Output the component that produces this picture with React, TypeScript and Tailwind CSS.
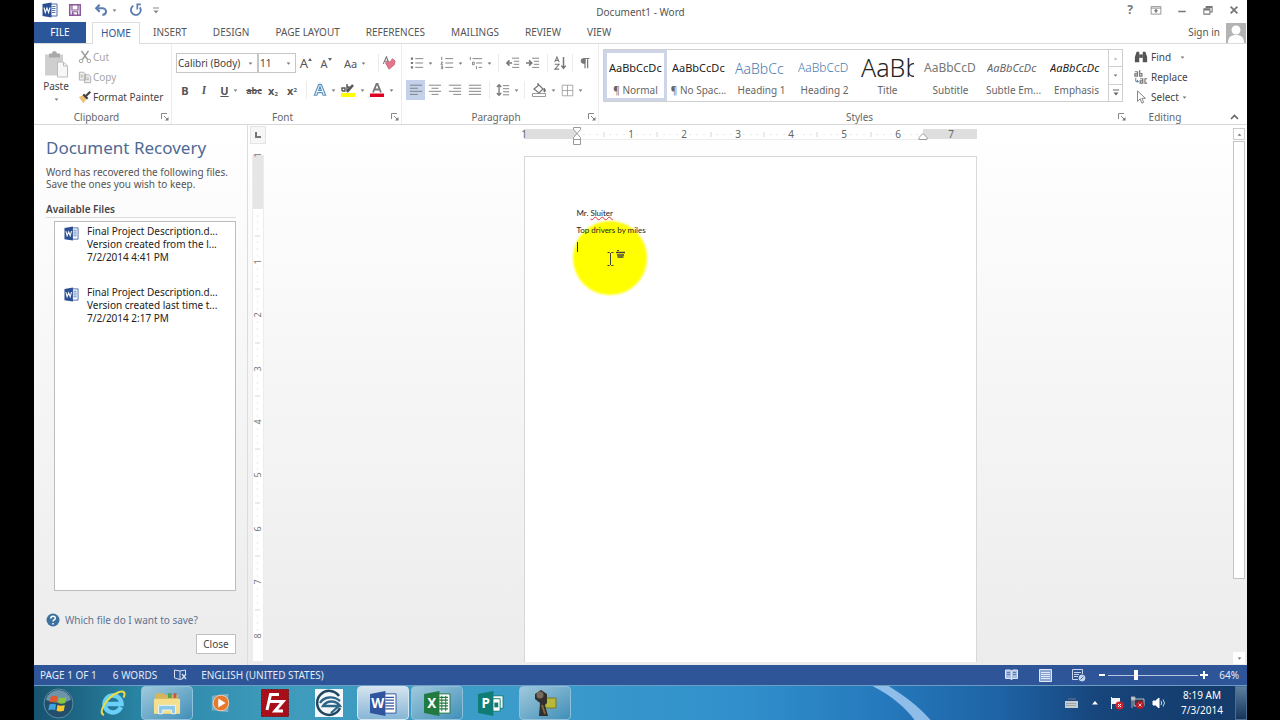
import type { ReactNode } from "react";

function Caret({ light = false }: { light?: boolean }) {
  return (
    <svg width="5" height="3" viewBox="0 0 6 4" className="shrink-0" aria-hidden="true">
      <path d="M0.5 0.5h5L3 3.5z" fill={light ? "#bbb" : "#777"} />
    </svg>
  );
}

function Icon({ children, size = 16 }: { children: ReactNode; size?: number }) {
  return (
    <svg width={size} height={size} viewBox="0 0 16 16" fill="none" stroke="#777" className="shrink-0" aria-hidden="true">
      {children}
    </svg>
  );
}

function Tool({ label, className = "w-[20px]", children }: { label: string; className?: string; children: ReactNode }) {
  return (
    <button aria-label={label} className={`flex h-[20px] shrink-0 items-center justify-center gap-1 leading-none ${className}`}>
      {children}
    </button>
  );
}

function Divider() {
  return <span className="mx-1 h-[18px] w-px shrink-0 bg-[#ececec]" />;
}

function Launcher() {
  return (
    <button aria-label="More options" className="flex h-3 w-3 items-center justify-center">
      <svg width="8" height="8" viewBox="0 0 8 8" fill="none" stroke="#888" aria-hidden="true">
        <path d="M0.5 6V0.5H6M3 3l3 3" />
        <path d="M7.5 4v3.5H4z" fill="#777" stroke="none" />
      </svg>
    </button>
  );
}

function GroupLabel({ children, launcher = true }: { children: string; launcher?: boolean }) {
  return (
    <div className="mt-auto flex h-[14px] items-center text-[#666]">
      <span className="flex-1 text-center">{children}</span>
      {launcher && <Launcher />}
    </div>
  );
}

function WordMark({ size = 16 }: { size?: number }) {
  return (
    <svg width={size} height={size} viewBox="0 0 16 16" aria-hidden="true">
      <path d="M8 2h7v12H8z" fill="#fff" stroke="#4a6cab" />
      <path d="M10 4.500h3.500M10 6.500h3.500M10 8.500h3.500M10 10.500h3.500" stroke="#4a6cab" strokeWidth="0.900" />
      <path d="M0.500 2L9.500 0.500v15L0.500 14z" fill="#2b4f93" />
      <path d="M2 5.500l1.300 5L5 6l1.600 4.500L8 5.500" fill="none" stroke="#fff" strokeWidth="1.100" />
    </svg>
  );
}

function TitleBar() {
  const controls: { label: string; art: ReactNode }[] = [
    { label: "Ribbon display options", art: <><path d="M1.500 3.500h13v10h-13zM1.500 5.500h13" /><path d="M8 7.500v4M6 9.500l2-2 2 2" strokeWidth="1.800" /></> },
    { label: "Minimize", art: <path d="M3 10h10" strokeWidth="2" /> },
    { label: "Restore", art: <><path d="M2.500 6.500h8v7h-8zM2.500 8h8" strokeWidth="1.400" /><path d="M5.500 6V3.500h8v7H11M5.500 4.500h8" strokeWidth="1.400" /></> },
    { label: "Close", art: <path d="M3.500 3.500l9 9M12.500 3.500l-9 9" strokeWidth="2.400" /> },
  ];
  return (
    <header className="grid h-[22px] shrink-0 grid-cols-[1fr_auto_1fr] items-center">
      <div className="flex items-center pb-1 pl-2">
        <WordMark />
        <Tool label="Save" className="ml-[7px] w-[20px]">
          <Icon size={14}>
            <path d="M2 2h12v12H2z" stroke="#8a5a9c" strokeWidth="1.800" />
            <path d="M4.500 2v6h7V2M5 14v-4h6v4" stroke="#8a5a9c" strokeWidth="1.400" />
            <path d="M6.500 11v3" stroke="#8a5a9c" />
          </Icon>
        </Tool>
        <Tool label="Undo" className="ml-[6px] w-[28px]">
          <Icon size={14}>
            <path d="M3 6h6.500a4 3.500 0 0 1 0 7.500" stroke="#5b7cb0" strokeWidth="2.400" />
            <path d="M6.500 2L2.500 6l4 4" stroke="#5b7cb0" strokeWidth="2.400" />
          </Icon>
          <Caret />
        </Tool>
        <Tool label="Redo" className="ml-[7px] w-[20px]">
          <Icon size={14}>
            <path d="M5 3.200A5.600 5.600 0 1 0 12.500 5" stroke="#5b7cb0" strokeWidth="2.100" />
            <path d="M8.500 1.500h5M9.500 2v5.500" stroke="#5b7cb0" strokeWidth="1.900" />
          </Icon>
        </Tool>
        <Tool label="Customize quick access toolbar">
          <svg width="6" height="7" viewBox="0 0 6 7" aria-hidden="true"><path d="M0 1h6" stroke="#888" /><path d="M0.500 3.500h5L3 6.500z" fill="#888" /></svg>
        </Tool>
      </div>
      <h1 className="text-[10px] text-[#555]">Document1 - Word</h1>
      <div className="flex justify-end pb-1">
        <button aria-label="Help" className="w-[26px] text-[12px] font-bold text-[#777]">?</button>
        {controls.map((c) => (
          <Tool key={c.label} label={c.label} className="w-[26px]">
            <Icon size={12}>{c.art}</Icon>
          </Tool>
        ))}
      </div>
    </header>
  );
}

function Tabs() {
  const tabs = ["INSERT", "DESIGN", "PAGE LAYOUT", "REFERENCES", "MAILINGS", "REVIEW", "VIEW"];
  return (
    <nav className="flex h-[22px] shrink-0 items-stretch border-b border-[#dcdcdc] text-[10px] text-[#555]">
      <button className="w-[52px] bg-[#2b579a] text-white">FILE</button>
      <button className="-mb-px ml-[6px] w-[48px] border border-b-0 border-[#dcdcdc] bg-white text-[#2b579a]">HOME</button>
      {tabs.map((t) => (
        <button key={t} className="px-[13px]">{t}</button>
      ))}
      <div className="ml-auto flex items-center gap-[6px]">
        <a href="#signin">Sign in</a>
        <svg width="20" height="20" viewBox="0 0 20 20" className="mr-px" aria-hidden="true">
          <path d="M0 0h20v20H0z" fill="#b3b3b3" />
          <circle cx="10" cy="7" r="4.500" fill="#fff" />
          <path d="M2 20c0-6 3-8 8-8s8 2 8 8z" fill="#fff" />
        </svg>
      </div>
    </nav>
  );
}

function ClipboardGroup() {
  return (
    <section className="flex w-[138px] flex-col border-r border-[#ececec]">
      <div className="flex">
        <button className="flex w-[44px] flex-col items-center pt-[6px] text-[#444]">
          <svg width="26" height="29" viewBox="0 0 26 28" aria-hidden="true">
            <path d="M2 4h18v21H2z" fill="#cfcfcf" />
            <path d="M6 3h3a2.500 2.500 0 0 1 5 0h3v4H6z" fill="#aaa" />
            <path d="M14.500 11.500h6l4 4v11h-10z" fill="#f7f7f7" stroke="#bbb" />
            <path d="M20.500 11.500v4h4" fill="none" stroke="#bbb" />
          </svg>
          <span className="leading-[14px]">Paste</span>
          <span className="pt-[5px]"><Caret /></span>
        </button>
        <div className="flex flex-col items-start pt-[3px]">
          <button className="flex h-[20px] items-center gap-px text-[#a6a6a6]">
            <Icon size={14}>
              <path d="M4 1l7 10M12 1L5 11" stroke="#999" strokeWidth="1.800" />
              <circle cx="3.500" cy="12.500" r="2" stroke="#999" />
              <circle cx="12.500" cy="12.500" r="2" stroke="#999" />
            </Icon>
            Cut
          </button>
          <button className="flex h-[20px] items-center gap-px text-[#a6a6a6]">
            <Icon size={14}>
              <path d="M1.500 2.500h5l2 2v7h-7zM7.500 5.500h5l2 2v7h-7z" fill="#eee" stroke="#aaa" />
              <path d="M3 6h3M3 8h3M9.500 9h3M9.500 11h3" stroke="#aaa" />
            </Icon>
            Copy
          </button>
          <button className="flex h-[20px] items-center gap-px whitespace-nowrap text-[#444]">
            <Icon size={14}>
              <path d="M1 8l5-2 4 4-4 5z" fill="#eebf72" stroke="none" />
              <path d="M6 5l5 5M8.500 7.500L14 2" stroke="#444" strokeWidth="2.500" />
            </Icon>
            Format Painter
          </button>
        </div>
      </div>
      <GroupLabel>Clipboard</GroupLabel>
    </section>
  );
}

function Combo({ label, value, className }: { label: string; value: string; className: string }) {
  return (
    <span className={`relative flex h-[20px] items-center border border-[#c6c6c6] bg-white ${className}`}>
      <select aria-label={label} className="h-full w-full appearance-none bg-transparent pl-px text-[10px] text-[#444]">
        <option>{value}</option>
      </select>
      <span className="pointer-events-none absolute right-1 flex"><Caret /></span>
    </span>
  );
}

function FontGroup() {
  return (
    <section className="flex w-[230px] flex-col border-r border-[#ececec] pl-1">
      <div className="mt-[9px] flex h-[20px] items-center">
        <Combo label="Font" value="Calibri (Body)" className="w-[82px]" />
        <Combo label="Font size" value="11" className="w-[38px]" />
        <Tool label="Grow font"><span className="text-[13px] text-[#555]">A</span><span className="-ml-1 -mt-2"><svg width="4" height="3" viewBox="0 0 4 3"><path d="M0 3h4L2 0z" fill="#666" /></svg></span></Tool>
        <Tool label="Shrink font"><span className="text-[11px] text-[#555]">A</span><span className="-ml-1 -mt-2"><svg width="4" height="3" viewBox="0 0 4 3"><path d="M0 0h4L2 3z" fill="#666" /></svg></span></Tool>
        <Tool label="Change case" className="w-[38px]"><span className="text-[11px] text-[#555]">Aa</span><Caret /></Tool>
        <Divider />
        <Tool label="Clear formatting" className="w-[12px]">
          <Icon size={14}>
            <path d="M1.500 9L5 1l3 7M3 6h4" strokeWidth="1.300" />
            <path d="M4 8l3-2 2 1 3-4 3 3-1 4-6 5z" fill="#e2768b" stroke="#cc6179" />
          </Icon>
        </Tool>
      </div>
      <div className="mt-[7px] flex h-[20px] items-center text-[11px] text-[#555]">
        <Tool label="Bold" className="w-[18px]"><b>B</b></Tool>
        <Tool label="Italic"><i className="font-serif font-bold">I</i></Tool>
        <Tool label="Underline" className="w-[30px]"><b className="underline">U</b><Caret /></Tool>
        <Tool label="Strikethrough"><b className="text-[9px] line-through">abc</b></Tool>
        <Tool label="Subscript" className="w-[18px]"><b>x<sub className="text-[6px]">2</sub></b></Tool>
        <Tool label="Superscript"><b>x<sup className="text-[6px]">2</sup></b></Tool>
        <Divider />
        <Tool label="Text effects" className="w-[26px]">
          <Icon size={14}>
            <path d="M1.500 14L6.500 1.500h3l5 12.500h-3l-1-3h-5l-1 3zM6.500 8.500h3L8 4z" fill="#eef6fc" stroke="#5b93bd" strokeWidth="1.300" />
          </Icon>
          <Caret />
        </Tool>
        <Tool label="Text highlight color" className="w-[30px]">
          <Icon>
            <path d="M1 11h14v4H1z" fill="#ff0" stroke="none" />
            <path d="M7 10l6-7" stroke="#555" strokeWidth="2.500" />
            <path d="M2 9V6h3v3H2M7 2v6h2V5H7" strokeWidth="1.400" stroke="#555" />
          </Icon>
          <Caret />
        </Tool>
        <Tool label="Font color" className="w-[29px]">
          <Icon>
            <path d="M1 11.500h14v3.500H1z" fill="#e00020" stroke="none" />
            <path d="M4 10.500L7.500 2h1L12 10.500M5 7.500h6" strokeWidth="1.800" />
          </Icon>
          <Caret />
        </Tool>
      </div>
      <GroupLabel>Font</GroupLabel>
    </section>
  );
}

function ParagraphGroup() {
  return (
    <section className="flex w-[197px] flex-col border-r border-[#ececec] pl-1">
      <div className="mt-[9px] flex h-[20px] items-center">
        <Tool label="Bullets" className="w-[30px]">
          <Icon size={14}>
            <path d="M6 3h9M6 8h9M6 13h9" />
            <path d="M1 3h2.500M1 8h2.500M1 13h2.500" strokeWidth="2.500" />
          </Icon>
          <Caret />
        </Tool>
        <Tool label="Numbering" className="w-[30px]">
          <Icon size={14}>
            <path d="M6 3h9M6 8h9M6 13h9M2 1v3.500M1 7h2l-2 2.500h2.500M1 11.500h2v3H1M1.500 13H3" />
          </Icon>
          <Caret />
        </Tool>
        <Tool label="Multilevel list" className="w-[28px]">
          <Icon size={14}>
            <path d="M4 3h11M8 8h7M11 13h4M1.500 1v3.500M4 7h2v3H4zM8.500 11.500v3.500" />
          </Icon>
          <Caret />
        </Tool>
        <Divider />
        <Tool label="Decrease indent">
          <Icon size={14}><path d="M7 2.500h8M9 6h6M9 9.500h6M7 13h8" /><path d="M7 8H1M4 5L1 8l3 3" strokeWidth="1.800" /></Icon>
        </Tool>
        <Tool label="Increase indent">
          <Icon size={14}><path d="M7 2.500h8M9 6h6M9 9.500h6M7 13h8" /><path d="M0 8h6M3.500 5l3 3-3 3" strokeWidth="1.800" /></Icon>
        </Tool>
        <Divider />
        <Tool label="Sort" className="w-[16px]">
          <Icon size={14}><path d="M2 7l2.500-6L7 7M3 5h3M2 9.500h5l-5 5.500h5" strokeWidth="1.200" /><path d="M12 1v13M9.500 11l2.500 3 2.500-3" strokeWidth="1.700" /></Icon>
        </Tool>
        <Divider />
        <Tool label="Show formatting marks" className="w-[16px]">
          <Icon size={12}><path d="M8 3v12M11.500 3v12M6 2h8" strokeWidth="1.600" /><path d="M8 2H6a3 3 0 0 0 0 6.500h2z" fill="#777" /></Icon>
        </Tool>
      </div>
      <div className="mt-[7px] flex h-[20px] items-center">
        <Tool label="Align left" className="w-[19px] bg-[#c3d1ea]"><Icon size={14}><path d="M1 2.500h14M1 6h9M1 9.500h14M1 13h9" /></Icon></Tool>
        <Tool label="Align center"><Icon size={14}><path d="M1 2.500h14M4 6h8M1 9.500h14M4 13h8" /></Icon></Tool>
        <Tool label="Align right"><Icon size={14}><path d="M1 2.500h14M6 6h9M1 9.500h14M6 13h9" /></Icon></Tool>
        <Tool label="Justify"><Icon size={14}><path d="M1 2.500h14M1 6h14M1 9.500h14M1 13h14" /></Icon></Tool>
        <Divider />
        <Tool label="Line spacing" className="w-[26px]">
          <Icon size={14}><path d="M8 3h7M8 6.500h7M8 10h7M8 13.500h7" /><path d="M3.500 2v12M1 4.500L3.500 2 6 4.500M1 11.500L3.500 14 6 11.500" strokeWidth="1.500" /></Icon>
          <Caret />
        </Tool>
        <Divider />
        <Tool label="Shading" className="w-[28px]">
          <Icon><path d="M1.500 11.500h13v3h-13z" stroke="#999" /><path d="M3 7l5-4 4 4-4 4zM7 1v4" strokeWidth="1.300" /><path d="M13 6c2 2 1.500 4 0 4z" fill="#555" /></Icon>
          <Caret />
        </Tool>
        <Tool label="Borders" className="w-[29px]">
          <Icon size={13}><path d="M1.500 1.500h13v13h-13zM8 1.500v13M1.500 8h13" stroke="#999" /></Icon>
          <Caret />
        </Tool>
      </div>
      <GroupLabel>Paragraph</GroupLabel>
    </section>
  );
}

const styleCards = [
  { name: "¶ Normal", sample: "AaBbCcDc", look: "text-[11px] text-[#222]" },
  { name: "¶ No Spac...", sample: "AaBbCcDc", look: "text-[11px] text-[#222]" },
  { name: "Heading 1", sample: "AaBbCc", look: "text-[14px] font-light text-[#4a7ab0]" },
  { name: "Heading 2", sample: "AaBbCcD", look: "text-[12px] font-light text-[#4a7ab0]" },
  { name: "Title", sample: "AaBb", look: "text-[25px] font-light text-[#222]" },
  { name: "Subtitle", sample: "AaBbCcD", look: "text-[12px] text-[#777]" },
  { name: "Subtle Em...", sample: "AaBbCcDc", look: "text-[11px] italic text-[#666]" },
  { name: "Emphasis", sample: "AaBbCcDc", look: "text-[11px] italic text-[#222]" },
];

function StylesGroup() {
  return (
    <section className="flex min-w-0 flex-1 flex-col pl-1">
      <div className="mt-[5px] flex h-[53px] w-[520px] border border-[#cfcfcf] bg-white">
        {styleCards.map((s, i) => (
          <button
            key={s.name}
            className={`flex w-[63px] shrink-0 flex-col items-center border-[3px] ${i === 0 ? "border-[#cdd5e6]" : "border-transparent"}`}
          >
            <span className={`flex h-[30px] w-[53px] items-center justify-start overflow-hidden whitespace-nowrap ${s.look}`}>{s.sample}</span>
            <span className="whitespace-nowrap leading-[14px] text-[#666]">{s.name}</span>
          </button>
        ))}
        <div className="flex flex-1 flex-col divide-y divide-[#cfcfcf] border-l border-[#cfcfcf]">
          <Tool label="Scroll styles up" className="min-h-0 w-full flex-1"><span className="rotate-180"><Caret light /></span></Tool>
          <Tool label="Scroll styles down" className="min-h-0 w-full flex-1"><Caret /></Tool>
          <Tool label="More styles" className="min-h-0 w-full flex-1">
            <svg width="6" height="7" viewBox="0 0 6 7" aria-hidden="true"><path d="M0 1h6" stroke="#666" /><path d="M0.500 3.500h5L3 6.500z" fill="#666" /></svg>
          </Tool>
        </div>
      </div>
      <GroupLabel>Styles</GroupLabel>
    </section>
  );
}

function EditingGroup() {
  return (
    <section className="flex w-[119px] text-[#444]">
      <div className="flex w-[68px] flex-col pl-[6px]">
        <div className="flex flex-col items-start pt-[3px]">
          <button className="flex h-[20px] items-center gap-[3px]">
            <Icon size={14}>
              <path d="M1 14V8l2-6h3v12zM10 14V2h3l2 6v6z" fill="#555" stroke="none" />
              <path d="M6 5h4v4H6z" fill="#555" stroke="none" />
            </Icon>
            Find<span className="pl-[6px]"><Caret /></span>
          </button>
          <button className="flex h-[20px] items-center gap-[3px]">
            <Icon size={14}>
              <path d="M1 2h3v5H1V4.500h3M6.500 0v7H9V4H6.500M7 10h3v5H7v-2.500h3M15 10h-2.500v5H15" strokeWidth="1.400" />
              <path d="M2 9v4h3M3.500 11.500L5 13l-1.500 1.500" stroke="#4a6da7" />
            </Icon>
            Replace
          </button>
          <button className="flex h-[20px] items-center gap-[3px]">
            <Icon size={14}><path d="M4 1v12l3-3 2 5 2-1-2-4.500h4z" fill="#fff" stroke="#777" /></Icon>
            Select<Caret />
          </button>
        </div>
        <GroupLabel launcher={false}>Editing</GroupLabel>
      </div>
      <button aria-label="Collapse the ribbon" className="ml-auto mr-2 mt-auto flex h-[14px] items-center">
        <svg width="9" height="6" viewBox="0 0 9 6" fill="none" stroke="#666" strokeWidth="1.600"><path d="M1 5l3.500-3.500L8 5" /></svg>
      </button>
    </section>
  );
}

function RecoveryPane() {
  const files = [
    { from: "Version created from the l...", time: "7/2/2014 4:41 PM" },
    { from: "Version created last time t...", time: "7/2/2014 2:17 PM" },
  ];
  return (
    <aside className="flex w-[214px] shrink-0 flex-col border-r border-[#dcdcdc] pl-3 text-[10px] text-[#444]">
      <h2 className="mt-[9px] text-[17px] leading-[28px] text-[#4f6a94]">Document Recovery</h2>
      <p className="mt-[4px] leading-[12px] text-[#555]">Word has recovered the following files.<br />Save the ones you wish to keep.</p>
      <h3 className="mr-[11px] mt-[12px] border-b border-[#dcdcdc] font-semibold leading-[15px] text-[#444]">Available Files</h3>
      <ul className="ml-[8px] mr-[11px] mt-[3px] flex-1 border border-[#bdbdbd] bg-white pl-[9px] pt-[3px]">
        {files.map((f) => (
          <li key={f.time} className="mb-[22px] flex gap-[8px]">
            <span className="pt-px"><WordMark size={15} /></span>
            <a href="#file" className="min-w-0 whitespace-nowrap leading-[13px] text-[#222]">
              Final Project Description.d...<br />{f.from}<br />{f.time}
            </a>
          </li>
        ))}
      </ul>
      <a href="#help" className="mt-[21px] flex items-center gap-[5px] leading-[16px] text-[#5f7391]">
        <svg width="14" height="14" viewBox="0 0 14 14" aria-hidden="true">
          <circle cx="7" cy="7" r="6.500" fill="#3d719f" />
          <path d="M4.800 5.500c0-3 4.500-3 4.500-.3C9.300 7 7 6.800 7 8.600M7 10v1.500" fill="none" stroke="#fff" strokeWidth="1.500" />
        </svg>
        Which file do I want to save?
      </a>
      <button className="mb-[11px] mr-[11px] mt-[6px] h-[20px] w-[40px] self-end border border-[#c0c0c0] bg-white">Close</button>
    </aside>
  );
}

const inch = 53.4;

function VerticalRuler() {
  const marks = Array.from({ length: 64 }, (_, i) => i + 1).filter((i) => i % 8 !== 0);
  return (
    <div className="flex w-[19px] shrink-0 flex-col items-center">
      <button aria-label="Tab selector" className="mt-px flex h-[18px] w-[16px] items-center justify-center border border-[#e4e4e4] bg-[#f6f6f6]">
        <svg width="6" height="6" viewBox="0 0 6 6"><path d="M1 0v5h5" fill="none" stroke="#777" strokeWidth="2" /></svg>
      </button>
      <svg width="12" height="512" viewBox="0 0 12 512" className="mt-[5px]" fontSize="9" fill="#777" aria-hidden="true">
        <path d="M0 6h11v506H0z" fill="#fff" />
        <path d="M0 6h11v54H0z" fill="#e6e6e6" />
        <path d="M0.500 6v506M11.500 6v506" stroke="#ececec" />
        {marks.map((m) => (
          <path key={m} d={`M${m % 4 === 0 ? 3 : 5} ${Math.round(60 + (m * inch) / 8)}h${m % 4 === 0 ? 5 : 1}`} stroke="#d6d6d6" />
        ))}
        {[1, 0, 1, 2, 3, 4, 5, 6, 7, 8].map((n, i) =>
          n === 0 ? null : (
            <text key={i} textAnchor="middle" transform={`translate(9 ${Math.round(6 + i * inch)}) rotate(-90)`}>{n}</text>
          ),
        )}
      </svg>
    </div>
  );
}

function HorizontalRuler() {
  const marks = Array.from({ length: 51 }, (_, i) => i + 1).filter((i) => i % 8 !== 0);
  return (
    <svg width="461" height="31" viewBox="0 0 461 31" fontSize="10" fill="#666" className="mx-auto shrink-0" aria-hidden="true">
      <path d="M4 4h453v10H4z" fill="#fff" />
      <path d="M4 4h53v10H4zM403 4h54v10H403z" fill="#dedede" />
      <path d="M57 14.500h346" stroke="#ececec" />
      {marks.map((m) => (
        <path key={m} d={`M${Math.round(57 + (m * inch) / 8)} ${m % 4 === 0 ? 7 : 9}v${m % 4 === 0 ? 5 : 1}`} stroke="#d6d6d6" />
      ))}
      {[1, 0, 1, 2, 3, 4, 5, 6, 7].map((n, i) =>
        n === 0 ? null : (
          <text key={i} x={Math.round(4 + i * inch)} y="13" textAnchor="middle">{n}</text>
        ),
      )}
      <path d="M53.500 2.500h7v2L57 8.500l-3.500-4zM57 8.500l3.500 4v2h-7v-2zM53.500 14.500h7v5h-7z" fill="#fff" stroke="#999" />
      <path d="M403 8.500l4 4v2h-8v-2z" fill="#fff" stroke="#999" />
    </svg>
  );
}

function Page() {
  return (
    <article className="relative mx-auto w-[453px] flex-1 border border-b-0 border-[#d8d8d8] bg-white px-[52px] pt-[51px] font-['Lato',sans-serif] text-[8px] leading-[11px] text-[#222]">
      <span className="absolute left-[48px] top-[64px] h-[74px] w-[74px] rounded-full bg-[#ffff00] blur-[1px]" />
      <div className="relative">
        <p>Mr. <span className="underline decoration-[#d33] decoration-wavy underline-offset-0">Sluiter</span></p>
        <p className="mt-[6px]">Top drivers by miles</p>
        <p className="mt-[6px] h-[10px] w-px bg-[#333]" />
      </div>
      <svg width="22" height="20" viewBox="0 0 22 20" className="absolute left-[80px] top-[91px]" fill="none" stroke="#444" aria-hidden="true">
        <path d="M2.500 4.500h2l1 1 1-1h2M5.500 5v12M2.500 17.500h2l1-1 1 1h2" />
        <path d="M11 4.500h9M12 7h7M12.500 9h6" strokeWidth="1.500" />
        <path d="M12 2.500h2" />
      </svg>
    </article>
  );
}

function ScrollBar() {
  return (
    <div className="flex w-[14px] shrink-0 flex-col items-start">
      <button aria-label="Scroll up" className="mt-[3px] flex h-[12px] w-[12px] items-center justify-center border border-[#ccc] bg-white"><span className="rotate-180"><Caret /></span></button>
      <span className="mt-px h-[438px] w-[12px] border border-[#c4c4c4] bg-white" />
      <button aria-label="Scroll down" className="mb-px mt-auto flex h-[12px] w-[12px] items-center justify-center bg-white"><Caret /></button>
    </div>
  );
}

function StatusBar() {
  return (
    <footer className="flex h-[20px] shrink-0 items-center bg-[#2d5597] text-[10px] text-[#e4ebf6]">
      <span className="pl-[6px]">PAGE 1 OF 1</span>
      <span className="pl-[16px]">6 WORDS</span>
      <span className="pl-[17px]">
        <svg width="13" height="12" viewBox="0 0 13 12" fill="none" stroke="#d5dff0" aria-hidden="true">
          <path d="M6 2L0.500 1v8L6 10.500zM6 2l5.500-1v4M6 10.500l2-.5" />
          <path d="M8 5l4 5M12 5l-4 5" strokeWidth="1.300" />
        </svg>
      </span>
      <span className="pl-[14px]">ENGLISH (UNITED STATES)</span>
      <div className="ml-auto flex items-center">
        <Tool label="Read mode" className="w-[34px]">
          <svg width="13" height="12" viewBox="0 0 13 12" fill="#a9bcdd" stroke="#dfe7f4"><path d="M0.500 1h5l1 1 1-1h5v8.500h-5l-1 1.500-1-1.500h-5zM6.500 2v8" /><path d="M2 3.500h3M2 5.500h3M8 3.500h3M8 5.500h3" stroke="#5d7db4" /></svg>
        </Tool>
        <Tool label="Print layout" className="w-[34px]">
          <svg width="13" height="13" viewBox="0 0 13 13" fill="#8aa3cf" stroke="#dfe7f4"><path d="M0.500 0.500h12v12h-12zM2 3.500h9M2 5.500h9M2 7.500h9M2 9.500h9" /></svg>
        </Tool>
        <Tool label="Web layout" className="w-[34px]">
          <svg width="14" height="13" viewBox="0 0 14 13" fill="none" stroke="#c9d6ec"><path d="M6 10.500H0.500v-10h10V5M2 3.500h7M2 5.500h5M2 7.500h4" /><circle cx="10" cy="9" r="3" fill="#c9d6ec" /><path d="M8.500 10.500l3-3" stroke="#45689f" /></svg>
        </Tool>
        <button aria-label="Zoom out" className="flex w-[12px] justify-center"><svg width="6" height="2" viewBox="0 0 6 2"><path d="M0 0h6v2H0z" fill="#fff" /></svg></button>
        <span className="flex w-[90px] items-center">
          <input
            type="range"
            aria-label="Zoom"
            min="0"
            max="100"
            defaultValue="30"
            className="h-[11px] w-full appearance-none bg-transparent bg-[linear-gradient(#b5c5e2,#b5c5e2)] bg-[length:100%_1px] bg-center bg-no-repeat [&::-webkit-slider-thumb]:h-[10px] [&::-webkit-slider-thumb]:w-[4px] [&::-webkit-slider-thumb]:appearance-none [&::-webkit-slider-thumb]:bg-white"
          />
        </span>
        <button aria-label="Zoom in" className="flex w-[12px] justify-center"><svg width="8" height="8" viewBox="0 0 8 8"><path d="M3 0h2v3h3v2H5v3H3V5H0V3h3z" fill="#fff" /></svg></button>
        <span className="w-[37px] pr-2 text-right">64%</span>
      </div>
    </footer>
  );
}

function OfficeApp({ letter, color }: { letter: string; color: string }) {
  return (
    <svg width="27" height="25" viewBox="0 0 28 26" aria-hidden="true">
      {letter === "P" ? (
        <>
          <path d="M15 5h11v13H15z" fill="#fff" stroke={color} />
          <path d="M15 8h8v13h-8z" fill="#fff" stroke={color} />
          <path d="M17 12h4v5h-4z" fill={color} />
        </>
      ) : (
        <>
          <path d="M13 3h14v20H13z" fill="#fff" stroke={color} />
          <path d="M16 6.500h9M16 9.500h9M16 12.500h9M16 15.500h9M16 18.500h9" stroke={color} strokeWidth="1.300" />
        </>
      )}
      {letter === "X" && <path d="M18.500 5v16M22.500 5v16" stroke={color} />}
      <path d="M0 3l16-3v26L0 23z" fill={color} />
      <text x="8" y="18" textAnchor="middle" fontSize="14" fontWeight="bold" fill="#fff">{letter}</text>
    </svg>
  );
}

function TaskBar() {
  const apps: { label: string; open?: boolean; art: ReactNode }[] = [
    {
      label: "Internet Explorer",
      art: (
        <svg width="28" height="28" viewBox="0 0 28 28" fill="none" aria-hidden="true">
          <path d="M22 18c-2 4-5 5.500-8 5.500a8.500 8.500 0 1 1 8.500-8.500H8" stroke="#6bd0f7" strokeWidth="4.500" />
          <path d="M5 26C-2 24 8 8 19 3.500c6-2.500 8 0 5.500 5" stroke="#e8dc45" strokeWidth="2" />
        </svg>
      ),
    },
    {
      label: "File Explorer",
      open: true,
      art: (
        <svg width="28" height="25" viewBox="0 0 30 26" aria-hidden="true">
          <path d="M2 4l2-2h7l2 2h14v20H2z" fill="#d5b65a" />
          <path d="M1 8h28v16H1z" fill="#f3df8d" />
          <path d="M16 2h4v5h-4z" fill="#5a9e55" /><path d="M22 2h3v5h-3z" fill="#c65343" />
          <path d="M6 15h18v9h-4v-4H10v4H6z" fill="#8cc8e8" stroke="#eaf7ff" />
        </svg>
      ),
    },
    {
      label: "Media Player",
      art: (
        <svg width="22" height="22" viewBox="0 0 24 24" aria-hidden="true">
          <path d="M2 4l18-2v20L2 20z" fill="#a9c4d8" opacity="0.600" />
          <circle cx="12" cy="12" r="8.500" fill="#e8792a" stroke="#f4cfae" />
          <path d="M9 7l8 5-8 5z" fill="#fff" />
        </svg>
      ),
    },
    {
      label: "FileZilla",
      art: (
        <svg width="28" height="28" viewBox="0 0 28 28" aria-hidden="true">
          <path d="M0.500 0.500h27v27h-27z" fill="#a90f18" stroke="#7c0b12" strokeDasharray="2 1" />
          <path d="M6 21L9.500 5.500H18M8 12.500h7M13.500 12.500h8.500l-8 9.500h8" fill="none" stroke="#fff" strokeWidth="3" />
        </svg>
      ),
    },
    {
      label: "Browser",
      art: (
        <svg width="28" height="28" viewBox="0 0 28 28" fill="none" aria-hidden="true">
          <path d="M0 0h28v28H0z" fill="#f4f8fa" />
          <path d="M24 7a12 12 0 1 0 1 12" stroke="#1f4660" strokeWidth="2.500" />
          <path d="M5 14C9 7 19 7 25 12M8 17h17c-4-6-13-6-17 0zM16 24l9-8" stroke="#2d6587" strokeWidth="2.300" />
        </svg>
      ),
    },
    { label: "Word", open: true, art: <OfficeApp letter="W" color="#2f559e" /> },
    { label: "Excel", open: true, art: <OfficeApp letter="X" color="#237a40" /> },
    { label: "Publisher", art: <OfficeApp letter="P" color="#0f7c75" /> },
    {
      label: "Recorder",
      open: true,
      art: (
        <svg width="28" height="28" viewBox="0 0 28 28" aria-hidden="true">
          <path d="M13 9h12v10H13z" fill="#b8b83a" stroke="#777a20" />
          <path d="M4 5l6-4 6 4v9l-2 2 3 11H8l1-13-5-4z" fill="#31302c" />
          <circle cx="9" cy="6" r="3.500" fill="#776b5d" />
          <path d="M11 16l3 9" stroke="#80663f" strokeWidth="2" />
        </svg>
      ),
    },
  ];
  return (
    <nav aria-label="Taskbar" className="flex h-[35px] shrink-0 items-stretch border-t border-[#6d9cc4] bg-[linear-gradient(90deg,#16536f_0%,#2a86a6_9%,#3f9bbb_20%,#3b9ccb_40%,#3190cc_58%,#2579bc_70%,#1d62a4_80%,#17447a_88%,#143a68_100%)]">
      <button aria-label="Start" className="flex w-[52px] items-center justify-center pr-1">
        <svg width="31" height="31" viewBox="0 0 32 32" aria-hidden="true">
          <circle cx="16" cy="16" r="15" fill="#244f6c" stroke="#5f8fa6" />
          <path d="M3 12a13.500 13.500 0 0 1 26 0c-8 4-18 4-26 0z" fill="#8fb2c3" opacity="0.700" />
          <path d="M8 9c3-1.500 5-1 7 0l-1 6c-2-1-4-1-7 0z" fill="#e4592b" />
          <path d="M16.500 9.500c2 1 5 1 7.500 0l-1 6c-3 1-5 1-7.500 0z" fill="#8cc63f" />
          <path d="M6.500 17c3-1 5-1 7 0l-1 6c-2-1-4-1-7 0z" fill="#3fa3e0" />
          <path d="M15 17.500c2 1 5 1 7.500 0l-1 6c-3 1-5 1-7.500 0z" fill="#fbc926" />
        </svg>
      </button>
      {apps.map((a) => (
        <button key={a.label} aria-label={a.label} className="flex w-[54px] px-px">
          <span className={`flex h-full w-full items-center justify-center ${a.open ? (a.label === "Word" ? "rounded-sm border border-[#d3e6f2] bg-gradient-to-b from-[#d5e3ee] to-[#86b6d6]" : "rounded-sm border border-[#8fc1dc] bg-gradient-to-br from-[#9fc9dc] to-[#3f8fb8]") : ""}`}>
            {a.art}
          </span>
        </button>
      ))}
      <svg viewBox="0 0 490 34" preserveAspectRatio="xMidYMid slice" className="h-full min-w-0 flex-1" aria-hidden="true">
        <path d="M302 0h16c16 10 30 20 42 34h-16C336 23 322 10 302 0z" fill="#a9d0f5" opacity="0.800" />
      </svg>
      <div className="flex items-center">
        <Tool label="Input" className="w-[24px]">
          <svg width="13" height="12" viewBox="0 0 13 12"><path d="M0 4h13v7H0z" fill="#c4ccd0" /><path d="M3 2h8" stroke="#777" /><path d="M1.500 6.500h10M1.500 8.500h10" stroke="#78838a" strokeDasharray="1 1" /></svg>
        </Tool>
        <Tool label="Show hidden icons" className="w-[23px]"><svg width="6" height="4" viewBox="0 0 6 4"><path d="M0 3.500h6L3 0z" fill="#fff" /></svg></Tool>
        <Tool label="Action center" className="w-[21px]">
          <svg width="14" height="14" viewBox="0 0 14 14"><path d="M1.500 1v12" stroke="#eee" /><path d="M2 2h8v6H2z" fill="#f3f3f3" /><circle cx="9.500" cy="9.500" r="4" fill="#d2232f" /><path d="M8 8l3 3M11 8l-3 3" stroke="#fff" /></svg>
        </Tool>
        <Tool label="Network" className="w-[21px]">
          <svg width="14" height="14" viewBox="0 0 14 14"><path d="M3 3h10v7H3z" fill="#333c49" stroke="#b5bec9" /><path d="M0 1h4v3H0zM1 4v8" fill="#ccc" stroke="#aaa" /><circle cx="9" cy="9" r="4" fill="#b71927" /><path d="M7.500 7.500l3 3M10.500 7.500l-3 3" stroke="#f6c5c8" /></svg>
        </Tool>
        <Tool label="Volume" className="w-[21px]">
          <svg width="14" height="12" viewBox="0 0 14 12" fill="none" stroke="#c9d9ea"><path d="M1 4h2.500L7 1v10L3.500 8H1z" fill="#fff" stroke="#fff" /><path d="M9 4q1.500 2 0 4M11 2.500q3 3.500 0 7" /></svg>
        </Tool>
        <time className="w-[66px] text-center text-[10px] leading-[15px] text-white">8:19 AM<br />7/3/2014</time>
      </div>
      <button aria-label="Show desktop" className="w-[12px] border border-[#4a6f93] bg-gradient-to-b from-[#5c7f9f] to-[#15365a]" />
    </nav>
  );
}

export default function App() {
  return (
    <div className="flex h-screen bg-black pl-[34px] pr-[33px] font-['Noto_Sans','Open_Sans',sans-serif]">
      <div className="flex min-w-0 flex-1 flex-col overflow-hidden bg-white">
        <TitleBar />
        <Tabs />
        <div className="flex h-[81px] shrink-0 border-b border-[#d8d8d8] text-[10px]">
          <ClipboardGroup />
          <FontGroup />
          <ParagraphGroup />
          <StylesGroup />
          <EditingGroup />
        </div>
        <main className="flex min-h-0 flex-1 bg-gradient-to-b from-white to-[#ececec]">
          <RecoveryPane />
          <VerticalRuler />
          <div className="flex min-w-0 flex-1 flex-col pb-[3px]">
            <HorizontalRuler />
            <Page />
          </div>
          <ScrollBar />
        </main>
        <StatusBar />
        <TaskBar />
      </div>
    </div>
  );
}
